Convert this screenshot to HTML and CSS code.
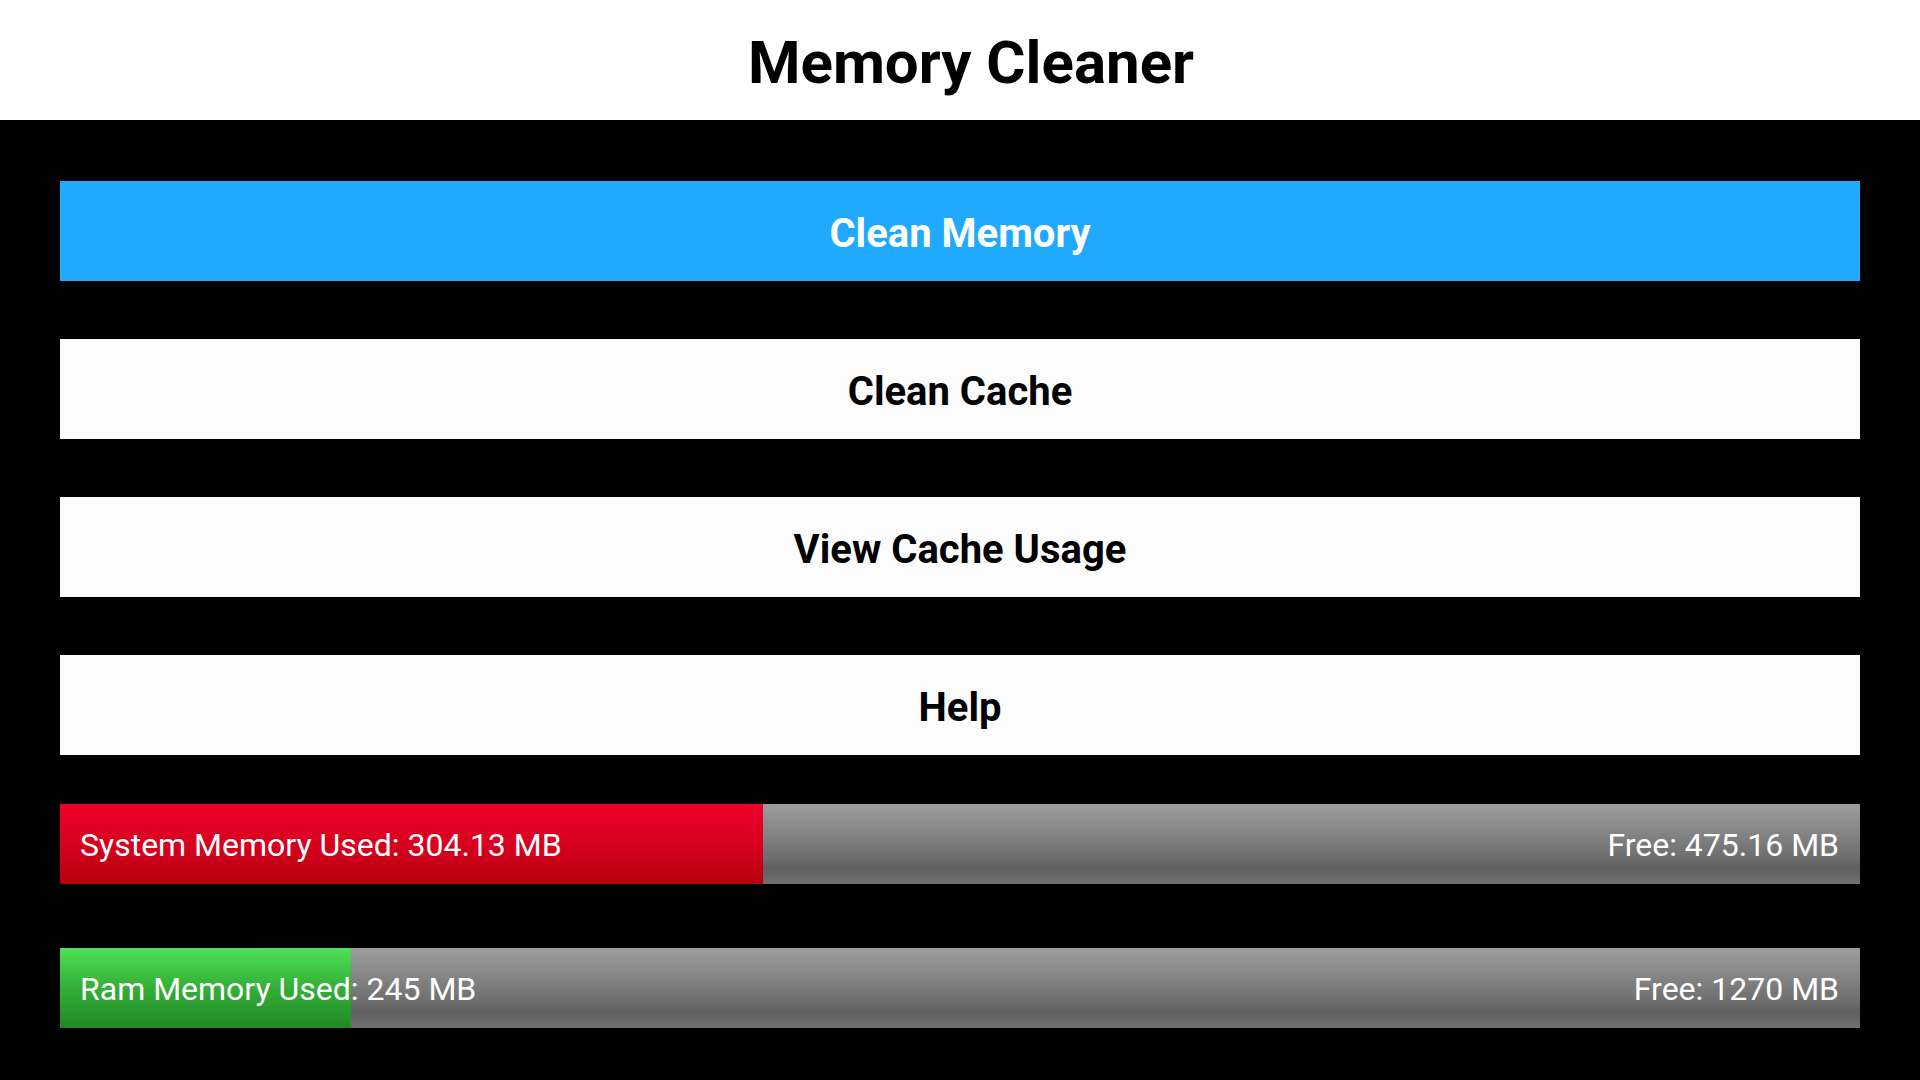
FILE: index.html
```html
<!DOCTYPE html>
<html>
<head>
<meta charset="utf-8">
<link rel="stylesheet" href="styles.css">
</head>
<body>
<header class="topbar"><h1 class="title">Memory Cleaner</h1></header>
<main class="content">
  <div class="actions">
    <button class="btn btn-primary">Clean Memory</button>
    <button class="btn">Clean Cache</button>
    <button class="btn">View Cache Usage</button>
    <button class="btn">Help</button>
  </div>
  <div class="meters">
    <div class="meter">
      <div class="meter-fill fill-red" style="width:39.03%"></div>
      <span class="meter-label">System Memory Used: 304.13 MB</span>
      <span class="meter-label">Free: 475.16 MB</span>
    </div>
    <div class="meter">
      <div class="meter-fill fill-green" style="width:16.17%"></div>
      <span class="meter-label">Ram Memory Used: 245 MB</span>
      <span class="meter-label">Free: 1270 MB</span>
    </div>
  </div>
</main>
</body>
</html>
```
FILE: styles.css
```css
* { box-sizing: border-box; }
html, body { margin: 0; padding: 0; }
body {
  width: 1920px;
  height: 1080px;
  background: #000;
  font-family: Roboto, "Liberation Sans", sans-serif;
  overflow: hidden;
}
.topbar {
  height: 120px;
  background: #fff;
  display: flex;
  align-items: center;
  justify-content: center;
  padding-top: 6px;
  padding-left: 22px;
}
.title {
  margin: 0;
  font-size: 60px;
  font-weight: 700;
  color: #000;
  line-height: 1;
}
.content {
  padding: 61px 60px 0;
}
.actions {
  display: flex;
  flex-direction: column;
  gap: 58px;
}
.btn {
  height: 100px;
  border: none;
  border-radius: 0;
  background: #fcfcfc;
  color: #000;
  font-family: Roboto, "Liberation Sans", sans-serif;
  font-size: 40px;
  font-weight: 700;
  padding: 5px 0 0;
  margin: 0;
  width: 100%;
}
.btn-primary {
  background: #1fa9ff;
  color: #fff;
}
.meters {
  margin-top: 49px;
  display: flex;
  flex-direction: column;
  gap: 64px;
}
.meter {
  position: relative;
  height: 80px;
  background: linear-gradient(to bottom, #9c9c9c 0%, #858585 35%, #6f6f6f 65%, #5f5f5f 80%, #707070 100%);
  display: flex;
  justify-content: space-between;
  align-items: center;
  padding: 2px 21px 0 20px;
}
.meter-fill {
  position: absolute;
  left: 0;
  top: 0;
  bottom: 0;
}
.fill-red {
  background: linear-gradient(to bottom, #ee002c 0%, #d8001f 50%, #b5000e 100%);
}
.fill-green {
  background: linear-gradient(to bottom, #4fe055 0%, #35b33a 45%, #218825 100%);
}
.meter-label {
  position: relative;
  color: #fff;
  font-size: 32px;
  font-weight: 400;
}
```
